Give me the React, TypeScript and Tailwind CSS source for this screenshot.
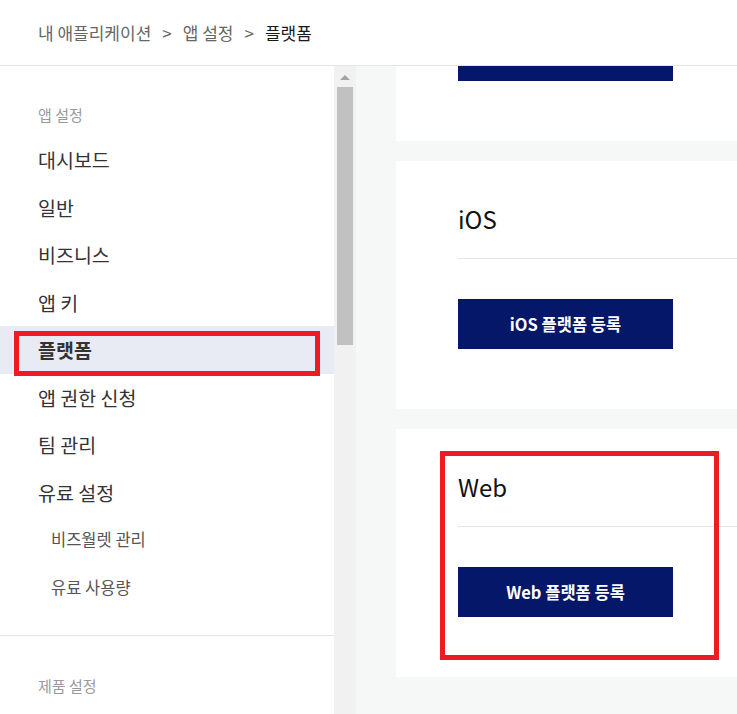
import React from 'react';

const font = { fontFamily: '"Noto Sans CJK KR", "Noto Sans", sans-serif' };

const menu = [
  { label: '대시보드' },
  { label: '일반' },
  { label: '비즈니스' },
  { label: '앱 키' },
  { label: '플랫폼', active: true },
  { label: '앱 권한 신청' },
  { label: '팀 관리' },
  { label: '유료 설정' },
  { label: '비즈월렛 관리', sub: true },
  { label: '유료 사용량', sub: true },
];

function PlatformCard({ title, button }: { title: string; button: string }) {
  return (
    <div className="w-[600px] shrink-0 bg-white pt-[40px] pb-[60px]">
      <h2 className="pl-[62px] text-[24px] leading-[36px] text-[#111]">{title}</h2>
      <div className="ml-[62px] mt-[21px] border-t border-[#e5e5e5]" />
      <div className="pl-[62px] pt-[40px]">
        <button className="w-[215px] h-[50px] bg-[#051768] text-white text-[16.5px] font-bold">
          {button}
        </button>
      </div>
    </div>
  );
}

export default function App() {
  return (
    <div className="relative w-[737px] h-[714px] overflow-hidden bg-white" style={font}>
      <div className="h-[66px] border-b border-[#e5e5e5] flex items-center pl-[38px] text-[17px] text-[#666] gap-[11px]">
        <span>내 애플리케이션</span>
        <span>&gt;</span>
        <span>앱 설정</span>
        <span>&gt;</span>
        <span className="text-[#1a1a1a]">플랫폼</span>
      </div>

      <div className="flex h-[648px]">
        <aside className="w-[334px] shrink-0 bg-white">
          <div className="pl-[38px] pt-[39px] pb-[11px] text-[15px] leading-[20px] text-[#999]">앱 설정</div>
          <ul>
            {menu.map(item => (
              <li
                key={item.label}
                className={`h-[47.5px] flex items-center ${item.sub ? 'pl-[51px] text-[16.5px] text-[#555]' : 'pl-[38px] text-[19.5px] text-[#333]'} ${item.active ? 'bg-[#e8ebf3] font-bold text-[#111]' : ''}`}
              >
                {item.label}
              </li>
            ))}
          </ul>
          <div className="mt-[24px] border-t border-[#e5e5e5]" />
          <div className="pl-[38px] pt-[40px] text-[15px] leading-[20px] text-[#999]">제품 설정</div>
        </aside>

        <div className="w-[22px] shrink-0 bg-[#f1f1f1] flex flex-col items-center">
          <div className="mt-[9px] w-0 h-0 border-l-[5px] border-r-[5px] border-b-[5px] border-l-transparent border-r-transparent border-b-[#a3a3a3]" />
          <div className="mt-[7px] w-[16px] h-[258px] bg-[#c1c1c1]" />
        </div>

        <main className="flex-1 overflow-hidden bg-[#f6f7f7] pl-[40px]">
          <div className="mt-[-173px] flex flex-col gap-[20px]">
            <PlatformCard title="Android" button="Android 플랫폼 등록" />
            <PlatformCard title="iOS" button="iOS 플랫폼 등록" />
            <PlatformCard title="Web" button="Web 플랫폼 등록" />
          </div>
        </main>
      </div>

      <div className="absolute left-[14px] top-[331px] w-[306px] h-[45px] border-[5px] border-[#ed1c24]" />
      <div className="absolute left-[440px] top-[451px] w-[279px] h-[209px] border-[5px] border-[#ed1c24]" />
    </div>
  );
}
